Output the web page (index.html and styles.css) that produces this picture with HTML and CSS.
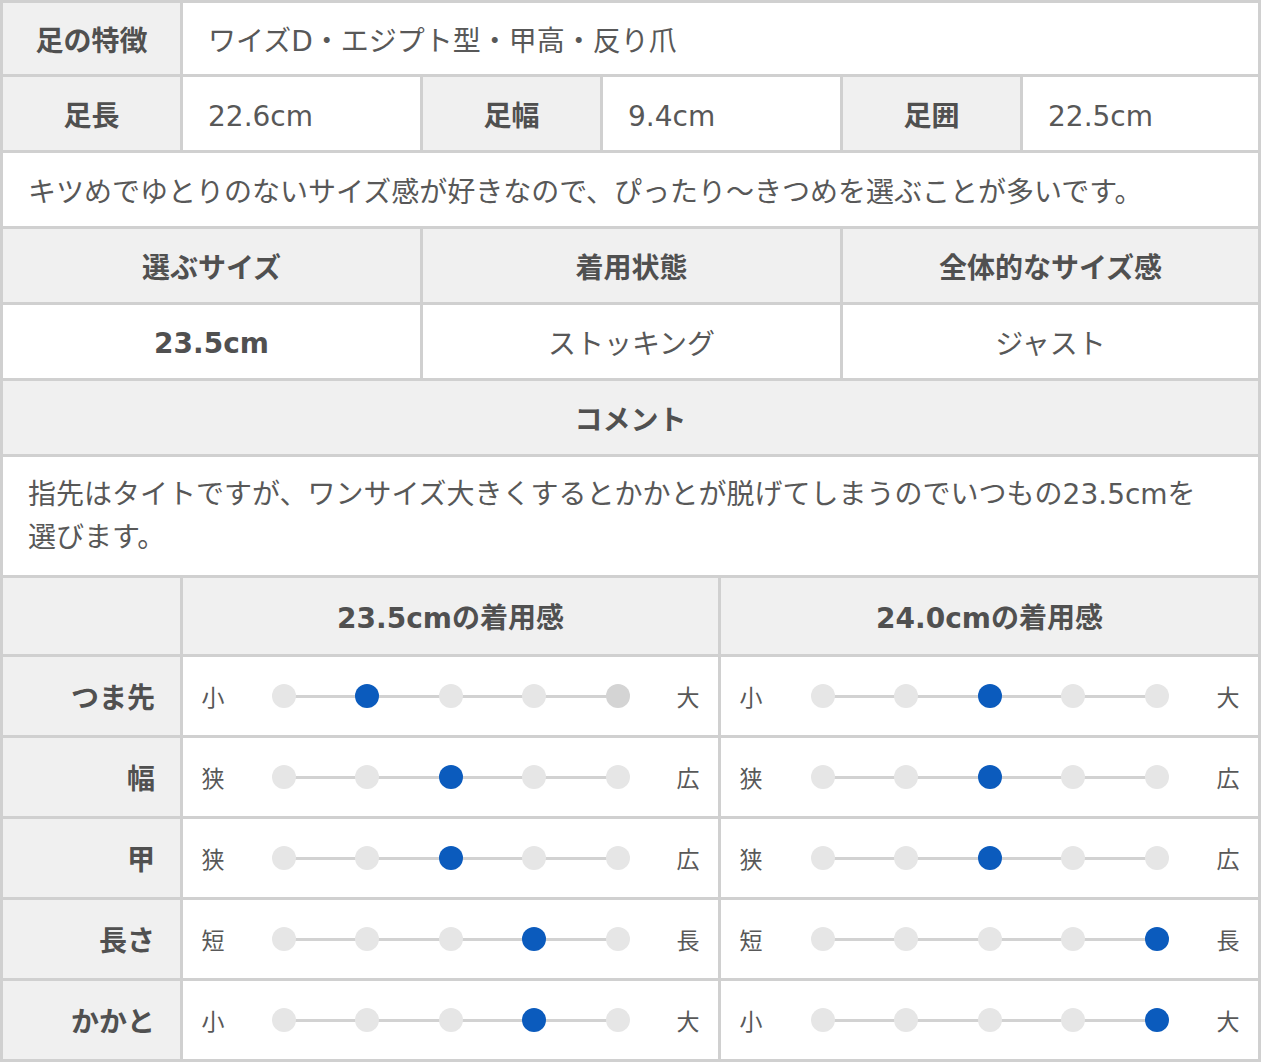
FILE: index.html
```html
<!DOCTYPE html>
<html lang="ja">
<head>
<meta charset="utf-8">
<title>サイズ感</title>
<link rel="stylesheet" href="styles.css">
</head>
<body>
<div class="sheet">
  <div class="row r-feature">
    <div class="cell head">足の特徴</div>
    <div class="cell val">ワイズD・エジプト型・甲高・反り爪</div>
  </div>
  <div class="row r-measure">
    <div class="cell head">足長</div>
    <div class="cell val num">22.6cm</div>
    <div class="cell head">足幅</div>
    <div class="cell val num">9.4cm</div>
    <div class="cell head">足囲</div>
    <div class="cell val num">22.5cm</div>
  </div>
  <div class="row r-full">
    <div class="cell val">キツめでゆとりのないサイズ感が好きなので、ぴったり〜きつめを選ぶことが多いです。</div>
  </div>
  <div class="row r-three">
    <div class="cell head center">選ぶサイズ</div>
    <div class="cell head center">着用状態</div>
    <div class="cell head center">全体的なサイズ感</div>
  </div>
  <div class="row r-three">
    <div class="cell center strong num-b">23.5cm</div>
    <div class="cell center">ストッキング</div>
    <div class="cell center">ジャスト</div>
  </div>
  <div class="row r-full">
    <div class="cell head center">コメント</div>
  </div>
  <div class="row r-comment">
    <div class="cell comment">指先はタイトですが、ワンサイズ大きくするとかかとが脱げてしまうのでいつもの23.5cmを選びます。</div>
  </div>

  <div class="row r-fit r-fithead">
    <div class="cell head"></div>
    <div class="cell head center">23.5cmの着用感</div>
    <div class="cell head center">24.0cmの着用感</div>
  </div>

  <div class="row r-fit">
    <div class="cell head label">つま先</div>
    <div class="cell scale">
      <span class="end">小</span>
      <div class="track"><i class="dot"></i><i class="dot on"></i><i class="dot"></i><i class="dot"></i><i class="dot dim"></i></div>
      <span class="end">大</span>
    </div>
    <div class="cell scale">
      <span class="end">小</span>
      <div class="track"><i class="dot"></i><i class="dot"></i><i class="dot on"></i><i class="dot"></i><i class="dot"></i></div>
      <span class="end">大</span>
    </div>
  </div>

  <div class="row r-fit">
    <div class="cell head label">幅</div>
    <div class="cell scale">
      <span class="end">狭</span>
      <div class="track"><i class="dot"></i><i class="dot"></i><i class="dot on"></i><i class="dot"></i><i class="dot"></i></div>
      <span class="end">広</span>
    </div>
    <div class="cell scale">
      <span class="end">狭</span>
      <div class="track"><i class="dot"></i><i class="dot"></i><i class="dot on"></i><i class="dot"></i><i class="dot"></i></div>
      <span class="end">広</span>
    </div>
  </div>

  <div class="row r-fit">
    <div class="cell head label">甲</div>
    <div class="cell scale">
      <span class="end">狭</span>
      <div class="track"><i class="dot"></i><i class="dot"></i><i class="dot on"></i><i class="dot"></i><i class="dot"></i></div>
      <span class="end">広</span>
    </div>
    <div class="cell scale">
      <span class="end">狭</span>
      <div class="track"><i class="dot"></i><i class="dot"></i><i class="dot on"></i><i class="dot"></i><i class="dot"></i></div>
      <span class="end">広</span>
    </div>
  </div>

  <div class="row r-fit">
    <div class="cell head label">長さ</div>
    <div class="cell scale">
      <span class="end">短</span>
      <div class="track"><i class="dot"></i><i class="dot"></i><i class="dot"></i><i class="dot on"></i><i class="dot"></i></div>
      <span class="end">長</span>
    </div>
    <div class="cell scale">
      <span class="end">短</span>
      <div class="track"><i class="dot"></i><i class="dot"></i><i class="dot"></i><i class="dot"></i><i class="dot on"></i></div>
      <span class="end">長</span>
    </div>
  </div>

  <div class="row r-fit">
    <div class="cell head label">かかと</div>
    <div class="cell scale">
      <span class="end">小</span>
      <div class="track"><i class="dot"></i><i class="dot"></i><i class="dot"></i><i class="dot on"></i><i class="dot"></i></div>
      <span class="end">大</span>
    </div>
    <div class="cell scale">
      <span class="end">小</span>
      <div class="track"><i class="dot"></i><i class="dot"></i><i class="dot"></i><i class="dot"></i><i class="dot on"></i></div>
      <span class="end">大</span>
    </div>
  </div>
</div>
</body>
</html>
```

FILE: styles.css
```css
* { box-sizing: border-box; }

html, body {
  margin: 0;
  padding: 0;
  background: #ffffff;
}

body {
  font-family: "DejaVu Sans", "Noto Sans CJK JP", sans-serif;
  color: #585858;
  font-size: 28px;
}

.sheet {
  width: 1261px;
  border-top: 3px solid #d0d0d0;
  border-left: 3px solid #d0d0d0;
}

.row {
  display: grid;
  height: 76px;
}

.r-feature { grid-template-columns: 180px 1078px; height: 74px; }
.r-measure { grid-template-columns: 180px 240px 180px 240px 180px 238px; }
.r-full { grid-template-columns: 1258px; }
.r-three { grid-template-columns: 420px 420px 418px; }
.r-comment { grid-template-columns: 1258px; height: 121px; }
.r-fit { grid-template-columns: 180px 538px 540px; height: 81px; }
.r-fithead { height: 79px; }

.cell {
  display: flex;
  align-items: center;
  border-right: 3px solid #d0d0d0;
  border-bottom: 3px solid #d0d0d0;
  background: #ffffff;
  white-space: nowrap;
}

.head {
  background: #f0f0f0;
  font-weight: bold;
  justify-content: center;
  color: #505050;
}

.val {
  padding-left: 25px;
  padding-right: 10px;
}

.num {
  padding-top: 6px;
}

.num-b {
  padding-top: 4px;
}

.center {
  justify-content: center;
}

.strong {
  font-weight: bold;
  color: #505050;
}

.comment {
  white-space: normal;
  line-height: 43px;
  padding: 0 40px 0 25px;
}

.label {
  justify-content: flex-end;
  padding-right: 25px;
}

.scale {
  justify-content: space-between;
  padding: 0 18px;
  font-size: 23px;
}

.end {
  width: 24px;
  text-align: center;
  font-family: "Noto Sans CJK JP", sans-serif;
}

.track {
  position: relative;
  width: 358px;
  height: 24px;
  display: flex;
  justify-content: space-between;
  align-items: center;
}

.track::before {
  content: "";
  position: absolute;
  left: 12px;
  right: 12px;
  top: 11px;
  height: 3px;
  background: #d2d2d2;
}

.dot {
  position: relative;
  width: 24px;
  height: 24px;
  border-radius: 50%;
  background: #e6e6e6;
}

.dot.dim {
  background: #d4d4d4;
}

.dot.on {
  background: #0b5bbd;
}
```
